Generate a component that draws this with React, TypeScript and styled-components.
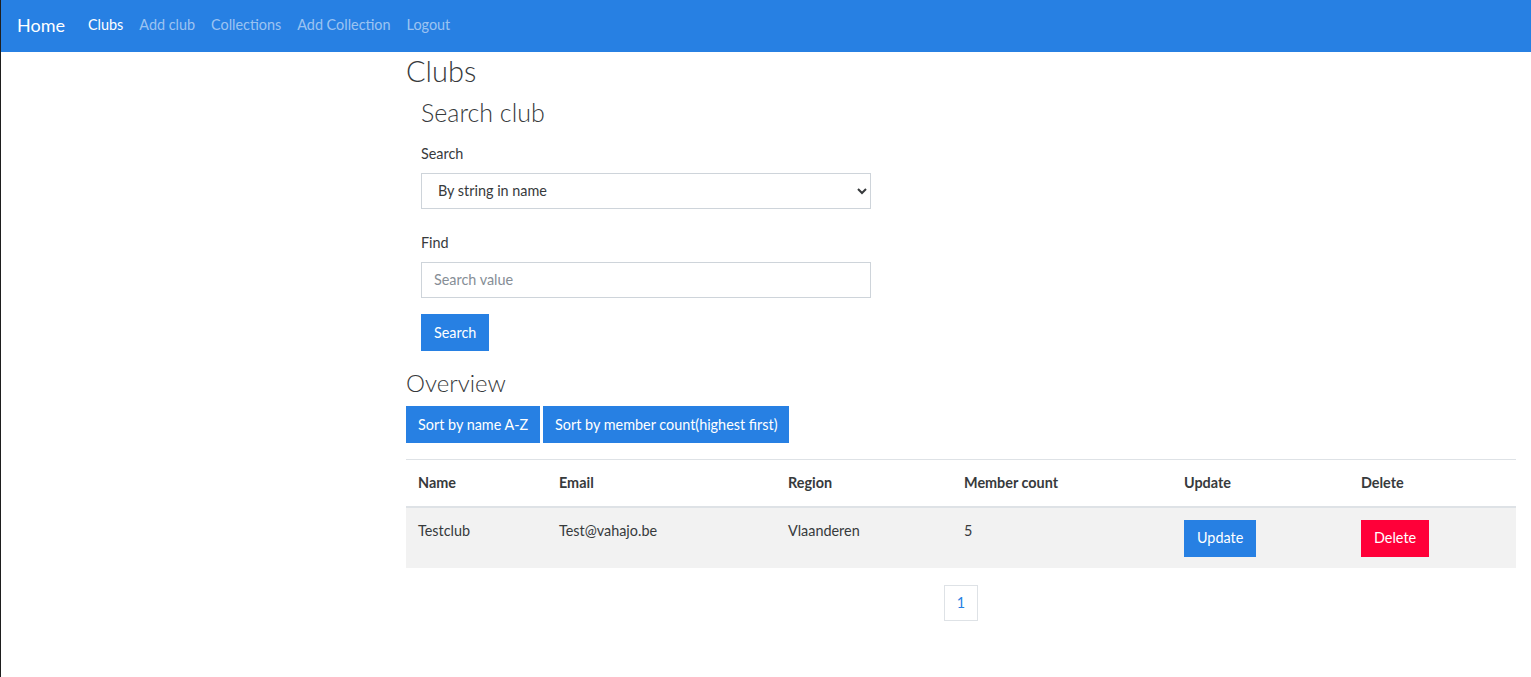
import React from "react";
import styled, { createGlobalStyle } from "styled-components";

const Global = createGlobalStyle`
  * { box-sizing: border-box; }
  html, body { margin: 0; padding: 0; background: #fff; }
  body { font-family: Lato, "Noto Sans", sans-serif; font-size: 14.4px; color: #373a3c; }
`;

const Page = styled.div`
  min-height: 677px;
  border-left: 1px solid #1e1e1e;
`;

const NavBar = styled.nav`
  height: 52px;
  background: #2780e3;
  display: flex;
  align-items: center;
  padding: 0 16px 3px;
`;

const Brand = styled.a`
  font-size: 18px;
  color: #fff;
  margin-right: 15px;
  text-decoration: none;
`;

const NavLink = styled.a<{ $active?: boolean }>`
  font-size: 14.4px;
  padding: 8px 8px;
  color: ${(p) => (p.$active ? "#fff" : "rgba(255,255,255,0.55)")};
  text-decoration: none;
`;

const Main = styled.main`
  padding: 0 15px 0 405px;
`;

const Title = styled.h1`
  font-size: 29px;
  font-weight: 300;
  margin: 2px 0 8px;
  line-height: 1.2;
`;

const SearchSection = styled.section`
  padding-left: 15px;
  width: 465px;
`;

const SubTitle = styled.h2`
  font-size: 25px;
  font-weight: 300;
  margin: 0 0 16px;
  line-height: 1.2;
`;

const FormGroup = styled.div<{ $gap: number }>`
  margin-bottom: ${(p) => p.$gap}px;
`;

const Label = styled.label`
  display: block;
  margin-bottom: 8px;
  line-height: 22px;
`;

const Select = styled.select`
  width: 450px;
  height: 36px;
  border: 1px solid #ced4da;
  border-radius: 0;
  background: #fff;
  padding: 0 12px;
  font: inherit;
  color: #373a3c;
`;

const Input = styled.input`
  width: 450px;
  height: 36px;
  border: 1px solid #ced4da;
  border-radius: 0;
  padding: 0 12px;
  font: inherit;
  color: #373a3c;
  &::placeholder { color: #868e96; }
`;

const Button = styled.button<{ $variant?: "primary" | "danger" }>`
  font: inherit;
  font-size: 14.4px;
  height: 37px;
  padding: 0 13px;
  border: none;
  border-radius: 0;
  color: #fff;
  background: ${(p) => (p.$variant === "danger" ? "#ff0039" : "#2780e3")};
  cursor: pointer;
`;

const SortButton = styled(Button)`
  padding: 0 12px;
`;

const Overview = styled.h3`
  font-size: 24px;
  font-weight: 300;
  margin: 18px 0 8px;
  line-height: 1.2;
`;

const SortBar = styled.div`
  display: flex;
  gap: 3px;
  margin-bottom: 16px;
`;

const Table = styled.table`
  width: 1110px;
  border-collapse: collapse;
  table-layout: fixed;
`;

const Th = styled.th<{ $w: number }>`
  width: ${(p) => p.$w}px;
  text-align: left;
  font-weight: 700;
  padding: 12px;
  line-height: 22px;
  border-top: 1px solid #dee2e6;
  border-bottom: 2px solid #dee2e6;
  vertical-align: bottom;
`;

const Tr = styled.tr`
  background: #f2f2f2;
`;

const Td = styled.td`
  padding: 12px 12px 11px;
  vertical-align: top;
  line-height: 22px;
`;

const Pager = styled.div`
  display: flex;
  justify-content: center;
  margin-top: 17px;
  width: 1110px;
`;

const PageItem = styled.a`
  display: flex;
  align-items: center;
  justify-content: center;
  width: 34px;
  height: 36px;
  border: 1px solid #dee2e6;
  color: #2780e3;
  font-size: 14.4px;
`;

const cols: [string, number][] = [
  ["Name", 141],
  ["Email", 229],
  ["Region", 176],
  ["Member count", 220],
  ["Update", 177],
  ["Delete", 167],
];

export default function App() {
  return (
    <Page>
      <Global />
      <NavBar>
        <Brand>Home</Brand>
        <NavLink $active>Clubs</NavLink>
        <NavLink>Add club</NavLink>
        <NavLink>Collections</NavLink>
        <NavLink>Add Collection</NavLink>
        <NavLink>Logout</NavLink>
      </NavBar>
      <Main>
        <Title>Clubs</Title>
        <SearchSection>
          <SubTitle>Search club</SubTitle>
          <FormGroup $gap={23}>
            <Label>Search</Label>
            <Select defaultValue="name">
              <option value="name">By string in name</option>
            </Select>
          </FormGroup>
          <FormGroup $gap={16}>
            <Label>Find</Label>
            <Input placeholder="Search value" />
          </FormGroup>
          <Button>Search</Button>
        </SearchSection>
        <Overview>Overview</Overview>
        <SortBar>
          <SortButton>Sort by name A-Z</SortButton>
          <SortButton>Sort by member count(highest first)</SortButton>
        </SortBar>
        <Table>
          <thead>
            <tr>
              {cols.map(([n, w]) => (
                <Th key={n} $w={w}>{n}</Th>
              ))}
            </tr>
          </thead>
          <tbody>
            <Tr>
              <Td>Testclub</Td>
              <Td>Test@vahajo.be</Td>
              <Td>Vlaanderen</Td>
              <Td>5</Td>
              <Td><Button>Update</Button></Td>
              <Td><Button $variant="danger">Delete</Button></Td>
            </Tr>
          </tbody>
        </Table>
        <Pager>
          <PageItem>1</PageItem>
        </Pager>
      </Main>
    </Page>
  );
}
